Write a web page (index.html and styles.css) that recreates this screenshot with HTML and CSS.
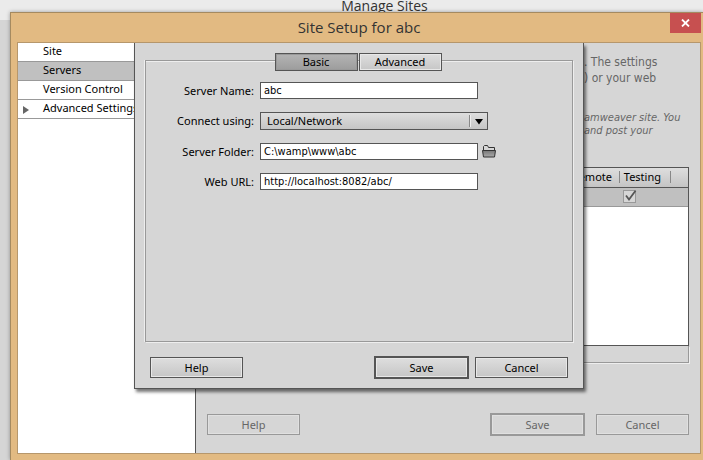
FILE: index.html
```html
<!DOCTYPE html>
<html lang="en">
<head>
<meta charset="utf-8">
<title>Site Setup for abc</title>
<link rel="stylesheet" href="styles.css">
</head>
<body>
<header class="backdrop-title">Manage Sites</header>
<main class="window">
  <div class="titlebar">
    <h1>Site Setup for abc</h1>
    <button class="close" type="button" aria-label="Close">
      <svg width="9" height="8" viewBox="0 0 9 8"><path d="M1 .5l7 7M8 .5l-7 7" stroke="#fff" stroke-width="1.8"/></svg>
    </button>
  </div>
  <div class="client">
    <nav class="sidebar">
      <a href="#site">Site</a>
      <a href="#servers" class="current">Servers</a>
      <a href="#version">Version Control</a>
      <a href="#advanced"><svg class="expand" width="6" height="8" viewBox="0 0 6 8"><path d="M0 0l6 4-6 4z" fill="#666"/></svg>Advanced Settings</a>
    </nav>
    <section class="servers">
      <div class="intro">
        <p class="lead">. The settings<br>) or your web</p>
        <p class="note">amweaver site. You<br>and post your</p>
      </div>
      <div class="server-list">
        <table>
          <thead><tr><th></th><th class="remote"><span>Remote</span></th><th class="testing"><span>Testing</span></th><th class="tail"></th></tr></thead>
          <tbody><tr><td></td><td></td><td class="mark"><label class="check"><input type="checkbox" checked disabled aria-label="Testing"><svg width="14" height="13" viewBox="0 0 14 13"><path d="M3 5.500l3 4L12.500 .8" fill="none" stroke="#555" stroke-width="1.8"/></svg></label></td><td></td></tr></tbody>
        </table>
      </div>
      <div class="list-footer"></div>
      <div class="actions dim">
        <button type="button" disabled>Help</button>
        <button type="button" class="primary" disabled>Save</button>
        <button type="button" disabled>Cancel</button>
      </div>
    </section>
    <form class="sheet">
      <div class="tabs">
        <button type="button" class="active">Basic</button>
        <button type="button">Advanced</button>
      </div>
      <div class="group">
        <div class="field"><label for="name">Server Name:</label><input id="name" type="text" value="abc"></div>
        <div class="field"><label for="connect">Connect using:</label>
          <div class="picker"><select id="connect"><option>Local/Network</option></select><svg width="15" height="12" viewBox="0 0 15 12"><path d="M.5 0v12" stroke="#888"/><path d="M1.500 0v12" stroke="#eee"/><path d="M6 4h8l-4 5.500z" fill="#000"/></svg></div>
        </div>
        <div class="field"><label for="folder">Server Folder:</label><input id="folder" type="text" value="C:\wamp\www\abc">
          <button class="browse" type="button" aria-label="Browse"><svg width="14" height="13" viewBox="0 0 14 13"><defs><linearGradient id="shade" x2="0" y2="1"><stop stop-color="#777"/><stop offset="1" stop-color="#aaa"/></linearGradient></defs><path d="M1.500 6V1.500L2.500 .5H5.500L6.500 2.500H12.500V6" fill="#d6d6d6" stroke="#333"/><path d="M.5 5.500h13L12.500 12h-11z" fill="url(#shade)" stroke="#333"/></svg></button>
        </div>
        <div class="field"><label for="url">Web URL:</label><input id="url" type="text" value="http://localhost:8082/abc/"></div>
      </div>
      <div class="actions">
        <button type="button">Help</button>
        <button type="button" class="primary">Save</button>
        <button type="button">Cancel</button>
      </div>
    </form>
  </div>
</main>
</body>
</html>
```
FILE: styles.css
```css
* { box-sizing: border-box; }
body {
  margin: 0;
  background: #d5d5d5;
  color: #000;
  font: 11px/16px "Noto Sans", sans-serif;
}
button, input, select { font: inherit; color: inherit; margin: 0; }
svg { display: block; }

.backdrop-title {
  height: 20px;
  padding-left: 66px;
  background: #ebebeb;
  color: #333;
  font: 14px/12px "Open Sans", sans-serif;
  text-align: center;
}
.window {
  position: relative;
  display: flex;
  flex-direction: column;
  min-height: calc(100vh - 12px);
  margin: -8px 0 0 10px;
  padding: 0 2px 6px 6px;
  background: #e2ba82;
  border: solid #a58a60;
  border-width: 1px 0 0 1px;
  box-shadow: 0 0 4px #0005;
}
.titlebar {
  position: relative;
  display: flex;
  justify-content: center;
  height: 29px;
}
h1 {
  margin: 0;
  font: 15px/29px "Open Sans", sans-serif;
  color: #333;
}
.close {
  position: absolute;
  top: 0;
  right: 0;
  display: grid;
  place-items: center;
  width: 31px;
  height: 20px;
  padding: 0;
  border: 0;
  background: #c75050;
}
.client {
  position: relative;
  display: flex;
  flex: 1;
  border: 1px solid #b6976c;
  background: #d6d6d6;
}

.sidebar {
  width: 178px;
  background: #fff;
  border-right: 1px solid #555;
}
.sidebar a {
  display: flex;
  align-items: center;
  position: relative;
  height: 19px;
  padding: 0 0 2px 25px;
  border-bottom: 1px solid #999;
  color: #000;
  text-decoration: none;
  white-space: nowrap;
}
.sidebar .current { background: #c0c0c0; }
.expand { position: absolute; left: 5px; top: 6px; }

.servers {
  display: flex;
  flex: 1;
  flex-direction: column;
  padding: 10px 10px 17px 11px;
}
.intro {
  width: 106px;
  height: 114px;
  margin-left: auto;
  color: #666;
  font-family: "DejaVu Sans Condensed", sans-serif;
  white-space: nowrap;
}
.intro p { margin: 0; }
.intro .lead { padding-top: 1px; font-size: 12px; }
.intro .note { margin-top: 25px; line-height: 13px; font-style: italic; }
.server-list {
  flex: 1;
  margin-right: 1px;
  background: #fff;
  border: 1px solid #555;
}
table { width: 100%; border-collapse: collapse; }
th {
  height: 19px;
  padding: 0;
  background: linear-gradient(#dedede, #c4c4c4);
  border-bottom: 1px solid #555;
  font-weight: normal;
  text-align: right;
}
th span { display: block; padding-right: 7px; line-height: 12px; border-right: 1px solid #888; }
.remote { width: 60px; }
.testing { width: 51px; }
.testing span { padding-right: 9px; }
.tail { width: 17px; }
td {
  height: 19px;
  padding: 0;
  background: #c0c0c0;
  border-bottom: 1px solid #999;
}
.check { position: relative; display: block; width: 13px; margin-left: 3px; }
.check input {
  display: block;
  appearance: none;
  width: 13px;
  height: 13px;
  background: #d6d6d6;
  border: 1px solid #999;
}
.check svg { position: absolute; left: 0; top: 0; }
.list-footer {
  height: 17px;
  margin-right: 1px;
  border: solid #999;
  border-width: 0 1px 1px;
  box-shadow: 1px 1px #eee;
}

.actions { display: flex; align-items: center; gap: 6px; }
.actions button {
  width: 93px;
  height: 21px;
  padding: 0;
  border: 1px solid #555;
  background: linear-gradient(#dedede, #c6c6c6);
  box-shadow: inset 0 0 0 1px #e8e8e8;
}
.actions button:first-child { margin-right: auto; }
.actions .primary { width: 95px; height: 23px; border-width: 2px; }
.dim { gap: 11px; margin: 50px 1px 0 0; }
.dim button { border-color: #999; background: none; color: #666; box-shadow: inset 0 0 0 1px #e0e0e0; }

.sheet {
  position: absolute;
  top: 0;
  left: 116px;
  right: 116px;
  padding: 10px 10px 9px;
  background: #d6d6d6;
  border: solid #555;
  border-width: 0 1px 1px;
  box-shadow: 2px 3px 3px #0008;
}
.tabs {
  position: relative;
  display: flex;
  justify-content: center;
  gap: 1px;
  margin-bottom: -11px;
  padding-right: 2px;
}
.tabs button {
  width: 83px;
  height: 18px;
  padding: 0;
  line-height: 16px;
  border: 1px solid #555;
  background: linear-gradient(#dedede, #c6c6c6);
  box-shadow: inset 0 0 0 1px #e8e8e8;
}
.tabs .active { background: linear-gradient(#b4b4b4, #9c9c9c); box-shadow: inset 0 0 0 1px #999; }
.group {
  display: flex;
  flex-direction: column;
  gap: 13px;
  height: 282px;
  padding-top: 21px;
  border: 1px solid #999;
  box-shadow: -1px 0 #eee, 1px 1px #eee, inset 0 1px #eee;
}
.field { display: flex; align-items: center; }
.field > label { width: 108px; margin-right: 6px; line-height: 16px; text-align: right; }
.field input {
  width: 218px;
  height: 17px;
  padding: 0 3px;
  border: 1px solid #555;
  background: #fff;
  font-family: "DejaVu Sans Condensed", sans-serif;
}
.picker { position: relative; width: 228px; }
.picker select {
  display: block;
  appearance: none;
  width: 100%;
  height: 18px;
  padding: 0 6px 1px;
  border: 1px solid #555;
  border-radius: 0;
  background: linear-gradient(#dedede, #c6c6c6);
}
.picker svg { position: absolute; right: 4px; top: 3px; pointer-events: none; }
.browse { margin-left: 4px; padding: 0; border: 0; background: none; }
.sheet .actions { margin: 14px 5px 0 5px; }
```
